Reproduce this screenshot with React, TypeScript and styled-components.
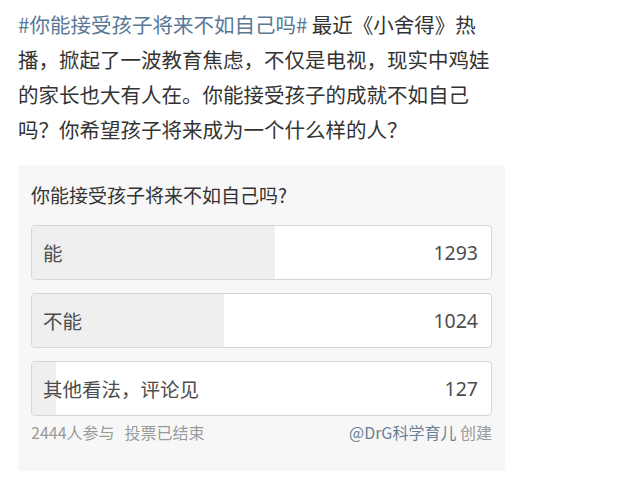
import React from "react";
import styled, { createGlobalStyle } from "styled-components";

const Global = createGlobalStyle`
  html, body { margin: 0; padding: 0; background: #ffffff; }
  body { font-family: "Noto Sans CJK SC", "Noto Sans", sans-serif; }
`;

const Page = styled.div`
  padding: 7px 0 0 18px;
  width: 640px;
  box-sizing: border-box;
`;

const Post = styled.p`
  margin: 0;
  width: 490px;
  font-size: 20.5px;
  line-height: 35px;
  color: #333333;
`;

const Tag = styled.span`
  color: #587896;
`;

const Card = styled.div`
  margin-top: 18px;
  width: 487px;
  box-sizing: border-box;
  background: #f7f7f7;
  padding: 16px 13px 28px 13px;
  display: flex;
  flex-direction: column;
`;

const Title = styled.div`
  font-size: 19px;
  line-height: 28px;
  color: #333333;
  margin-bottom: 16px;
`;

const Options = styled.div`
  display: flex;
  flex-direction: column;
  gap: 13px;
`;

const Option = styled.div`
  position: relative;
  height: 55px;
  box-sizing: border-box;
  border: 1px solid #d6d6d6;
  border-radius: 4px;
  background: #ffffff;
  overflow: hidden;
  display: flex;
  align-items: center;
  justify-content: space-between;
  padding: 0 13px 0 11px;
`;

const Fill = styled.div`
  position: absolute;
  left: 0;
  top: 0;
  bottom: 0;
  background: #efefef;
`;

const Label = styled.span`
  position: relative;
  font-size: 19.5px;
  color: #4d4d4d;
`;

const Count = styled.span`
  position: relative;
  font-size: 19.5px;
  color: #4d4d4d;
  font-family: "Noto Sans", "Noto Sans CJK SC", sans-serif;
`;

const Footer = styled.div`
  margin-top: 5px;
  display: flex;
  justify-content: space-between;
  font-size: 16px;
  line-height: 22px;
  color: #9a9a9a;
`;

const Creator = styled.span`
  color: #6b7f94;
`;

const Gap = styled.span`
  margin-left: 10px;
`;

const options = [
  { label: "能", count: 1293 },
  { label: "不能", count: 1024 },
  { label: "其他看法，评论见", count: 127 },
];
const total = 2444;

export default function App() {
  return (
    <>
      <Global />
      <Page>
        <Post>
          <Tag>#你能接受孩子将来不如自己吗#</Tag> 最近《小舍得》热播，掀起了一波教育焦虑，不仅是电视，现实中鸡娃的家长也大有人在。你能接受孩子的成就不如自己吗？你希望孩子将来成为一个什么样的人？
        </Post>
        <Card>
          <Title>你能接受孩子将来不如自己吗?</Title>
          <Options>
            {options.map((o) => (
              <Option key={o.label}>
                <Fill style={{ width: `${(o.count / total) * 100}%` }} />
                <Label>{o.label}</Label>
                <Count>{o.count}</Count>
              </Option>
            ))}
          </Options>
          <Footer>
            <span>
              {total}人参与<Gap>投票已结束</Gap>
            </span>
            <span>
              <Creator>@DrG科学育儿</Creator> 创建
            </span>
          </Footer>
        </Card>
      </Page>
    </>
  );
}
